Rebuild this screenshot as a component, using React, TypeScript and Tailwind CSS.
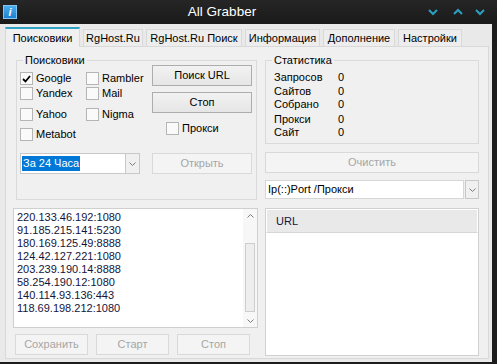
import React from "react";

const font = { fontFamily: '"Liberation Sans", Arial, sans-serif' };

const tabs = [
  { label: "Поисковики", w: "w-[75px]", active: true },
  { label: "RgHost.Ru", w: "w-[60px]" },
  { label: "RgHost.Ru Поиск", w: "w-[96px]" },
  { label: "Информация", w: "w-[75px]" },
  { label: "Дополнение", w: "w-[72px]" },
  { label: "Настройки", w: "w-[64px]" },
];

const proxies = [
  "220.133.46.192:1080",
  "91.185.215.141:5230",
  "180.169.125.49:8888",
  "124.42.127.221:1080",
  "203.239.190.14:8888",
  "58.254.190.12:1080",
  "140.114.93.136:443",
  "118.69.198.212:1080",
];

const stats = [
  { label: "Запросов", mt: "mt-[10px]" },
  { label: "Сайтов", mt: "mt-[1px]" },
  { label: "Собрано", mt: "mt-0" },
  { label: "Прокси", mt: "mt-[2px]" },
  { label: "Сайт", mt: "mt-0" },
];

const Chevron = ({ up }: { up?: boolean }) => (
  <svg width="12" height="8" viewBox="0 0 12 8">
    <polyline
      points={up ? "2,6 6,2 10,6" : "2,2 6,6 10,2"}
      fill="none"
      stroke="#2aa0c2"
      strokeWidth="2"
    />
  </svg>
);

const SmallArrow = ({ up }: { up?: boolean }) => (
  <svg width="7" height="4" viewBox="0 0 7 4">
    <polyline
      points={up ? "0.5,3.5 3.5,0.5 6.5,3.5" : "0.5,0.5 3.5,3.5 6.5,0.5"}
      fill="none"
      stroke="#7a7a7a"
      strokeWidth="1"
    />
  </svg>
);

const Check = ({ checked, label }: { checked?: boolean; label: string }) => (
  <div className="flex h-[13px] items-center">
    <div className="flex h-[13px] w-[13px] items-center justify-center border border-[#b5b5b5] bg-[#fafafa]">
      {checked && (
        <svg width="9" height="8" viewBox="0 0 9 8">
          <polyline points="1,4 3.5,6.5 8,1" fill="none" stroke="#000" strokeWidth="1.8" />
        </svg>
      )}
    </div>
    <span className="ml-[3px] text-[11px] leading-[13px] text-black">{label}</span>
  </div>
);

const Button = ({
  label,
  disabled,
  className = "",
}: {
  label: string;
  disabled?: boolean;
  className?: string;
}) => (
  <div
    className={
      "flex h-[21px] items-center justify-center border text-[11px] " +
      (disabled
        ? "border-[#d9d9d9] bg-[#f4f4f4] text-[#a6a6a6] "
        : "border-[#adadad] bg-gradient-to-b from-[#f2f2f2] to-[#e6e6e6] text-black ") +
      className
    }
  >
    {label}
  </div>
);

const GroupBox = ({
  label,
  className = "",
  children,
}: {
  label: string;
  className?: string;
  children: React.ReactNode;
}) => (
  <div className={"relative border border-[#dadada] " + className}>
    <span className="absolute left-[6px] top-[-7px] bg-[#f0f0f0] px-[2px] text-[11px] leading-[13px] text-black">
      {label}
    </span>
    {children}
  </div>
);

export default function App() {
  return (
    <div className="flex h-[364px] w-[497px] flex-col bg-[#1c1c1c]" style={font}>
      {/* title bar */}
      <div className="flex h-[24px] items-center bg-gradient-to-b from-[#262626] to-[#1a1a1a]">
        <div className="ml-[3px] flex h-[14px] w-[14px] items-center justify-center bg-gradient-to-b from-[#4cb0f0] to-[#1b7fd0] text-[11px] font-bold italic leading-none text-white shadow-[inset_0_0_0_1px_#7fc6f5]">
          i
        </div>
        <div className="flex-1 text-center text-[13.5px] text-white">All Grabber</div>
        <div className="flex w-[70px] items-center">
          <Chevron />
          <span className="ml-[13px]">
            <Chevron up />
          </span>
          <span className="ml-[10px]">
            <Chevron />
          </span>
        </div>
      </div>

      {/* body */}
      <div className="mb-[2px] mr-[5px] flex flex-1 flex-col bg-[#e9e9e9] text-black">
        {/* tabs */}
        <div className="relative z-10 ml-[5px] mt-[3px] flex h-[19px] items-end gap-[3px]">
          {tabs.map((t) =>
            t.active ? (
              <div
                key={t.label}
                className={
                  t.w +
                  " -mb-px flex h-[20px] items-center justify-center border-x border-t-2 border-x-[#d9d9d9] border-t-[#2ea3c6] bg-[#f0f0f0] text-[11px]"
                }
              >
                {t.label}
              </div>
            ) : (
              <div
                key={t.label}
                className={
                  t.w +
                  " flex h-[17px] items-center justify-center border-x border-t border-[#d9d9d9] bg-[#ededed] text-[11px]"
                }
              >
                {t.label}
              </div>
            )
          )}
        </div>

        {/* panel */}
        <div className="mb-[3px] ml-[5px] mr-[3px] flex h-[313px] border border-[#d9d9d9] bg-[#f0f0f0]">
          {/* left column */}
          <div className="ml-[7px] flex w-[245px] flex-col">
            <GroupBox label="Поисковики" className="ml-[3px] mt-[13px] flex h-[140px] w-[241px] flex-col">
              <div className="flex h-[80px]">
                <div className="w-[135px] pl-[3px] pt-[11px]">
                  <div className="flex">
                    <div className="w-[66px]">
                      <Check checked label="Google" />
                    </div>
                    <Check label="Rambler" />
                  </div>
                  <div className="mt-[2px] flex">
                    <div className="w-[66px]">
                      <Check label="Yandex" />
                    </div>
                    <Check label="Mail" />
                  </div>
                  <div className="mt-[8px] flex">
                    <div className="w-[66px]">
                      <Check label="Yahoo" />
                    </div>
                    <Check label="Nigma" />
                  </div>
                  <div className="mt-[7px]">
                    <Check label="Metabot" />
                  </div>
                </div>
                <div className="w-[100px] pt-[4px]">
                  <Button label="Поиск URL" />
                  <Button label="Стоп" className="mt-[6px]" />
                  <div className="ml-[14px] mt-[9px]">
                    <Check label="Прокси" />
                  </div>
                </div>
              </div>
              <div className="mt-[12px] flex">
                <div className="ml-[3px] flex h-[21px] w-[120px] border border-[#c8c8c8] bg-white">
                  <div className="flex flex-1 items-center pl-[1px]">
                    <span className="bg-[#0078d7] px-[1px] text-[11px] leading-[15px] text-white">За 24 Часа</span>
                  </div>
                  <div className="flex w-[14px] items-center justify-center border-l border-[#c8c8c8] bg-[#f0f0f0]">
                    <SmallArrow />
                  </div>
                </div>
                <Button label="Открыть" disabled className="ml-[12px] w-[100px]" />
              </div>
            </GroupBox>

            {/* proxy list */}
            <div className="mt-[8px] flex h-[120px] w-[245px] border border-[#cfcfcf] bg-white">
              <div className="flex-1 pl-[3px] pt-[2px] text-[11px] leading-[13px] text-[#14143c]">
                {proxies.map((p) => (
                  <div key={p}>{p}</div>
                ))}
              </div>
              <div className="flex w-[14px] flex-col bg-[#f7f7f7]">
                <div className="flex h-[13px] items-center justify-center">
                  <SmallArrow up />
                </div>
                <div className="flex-1 px-[2px]">
                  <div className="mt-[21px] h-[69px] border border-[#cdcdcd] bg-[#eeeeee]" />
                </div>
                <div className="flex h-[13px] items-center justify-center">
                  <SmallArrow />
                </div>
              </div>
            </div>

            <div className="ml-[2px] mt-[6px] flex gap-[8px]">
              <Button label="Сохранить" disabled className="w-[73px]" />
              <Button label="Старт" disabled className="w-[73px]" />
              <Button label="Стоп" disabled className="w-[73px]" />
            </div>
          </div>

          {/* right column */}
          <div className="ml-[7px] flex w-[214px] flex-col">
            <GroupBox label="Статистика" className="mt-[13px] h-[84px] w-[214px]">
              <div className="pl-[8px]">
                {stats.map((s) => (
                  <div key={s.label} className={s.mt + " flex text-[11px] leading-[13px]"}>
                    <span className="w-[64px]">{s.label}</span>
                    <span>0</span>
                  </div>
                ))}
              </div>
            </GroupBox>

            <Button label="Очистить" disabled className="mt-[8px] w-[214px]" />

            <div className="mt-[7px] flex h-[19px] w-[214px]">
              <div className="flex flex-1 items-center border border-[#d6d6d6] bg-white pl-[2px] text-[11px]">
                Ip(::)Port /Прокси
              </div>
              <div className="ml-[1px] flex w-[14px] items-center justify-center border border-[#c8c8c8] bg-[#f0f0f0]">
                <SmallArrow />
              </div>
            </div>

            <div className="mt-[9px] flex h-[148px] w-[214px] flex-col border border-[#d0d0d0] bg-white">
              <div className="flex h-[24px] items-center border border-b-[#d6d6d6] border-x-white border-t-white bg-[#e9e9e9] pl-[9px] text-[11px] text-[#14143c]">
                URL
              </div>
            </div>
          </div>
        </div>
      </div>
    </div>
  );
}
